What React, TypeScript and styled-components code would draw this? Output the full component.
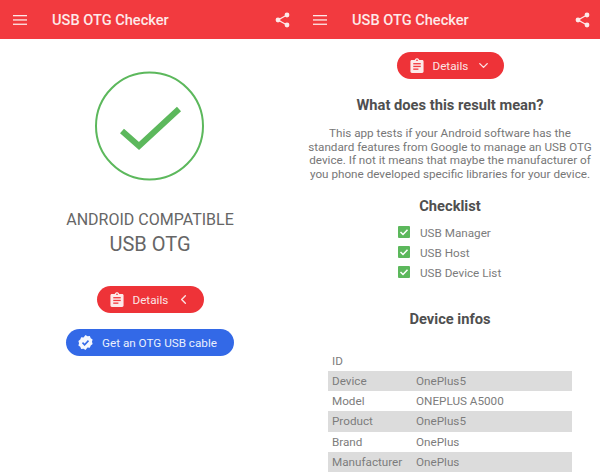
import React from 'react';
import styled, { createGlobalStyle } from 'styled-components';
import { ChevronDown, ChevronLeft } from 'lucide-react';

const Global = createGlobalStyle`
  html, body {
    margin: 0;
    padding: 0;
    background: #fff;
    font-family: Roboto, "Liberation Sans", sans-serif;
  }
`;

const Page = styled.div`
  width: 600px;
  height: 475px;
  display: flex;
  overflow: hidden;
`;

const Screen = styled.div`
  width: 300px;
  display: flex;
  flex-direction: column;
  align-items: center;
`;

const Header = styled.header`
  align-self: stretch;
  height: 39px;
  flex-shrink: 0;
  background: #f23a3f;
  color: #fde9e9;
  display: flex;
  align-items: center;
  padding: 0 10px 0 13px;
`;

const Title = styled.div`
  font-size: 14.6px;
  font-weight: 500;
  margin-left: 25px;
  flex: 1;
`;

const HeaderIcon = styled.svg`
  display: block;
  flex-shrink: 0;
`;

const ResultCircle = styled.svg`
  margin-top: 32px;
  display: block;
`;

const Compatible = styled.div`
  margin-top: 29px;
  font-size: 16px;
  line-height: 20px;
  color: #666;
`;

const OtgLabel = styled.div`
  margin-top: 2px;
  font-size: 20px;
  line-height: 24px;
  color: #666;
`;

const Pill = styled.div<{ $bg: string; $width: number; $top: number }>`
  width: ${(p) => p.$width}px;
  height: 27px;
  margin-top: ${(p) => p.$top}px;
  flex-shrink: 0;
  border-radius: 14px;
  background: ${(p) => p.$bg};
  color: #fbe4e4;
  font-size: 11.7px;
  display: flex;
  align-items: center;
`;

const DetailsText = styled.span`
  margin-left: 9px;
  width: 35px;
  white-space: nowrap;
`;

const PillIcon = styled.svg<{ $left: number }>`
  margin-left: ${(p) => p.$left}px;
  display: block;
`;

const ChevronSlot = styled.span`
  margin-left: 8px;
  display: flex;
`;

const CableText = styled.span`
  margin-left: 9px;
  color: #eaf0fd;
  white-space: nowrap;
`;

const Heading = styled.h2<{ $top: number }>`
  margin: ${(p) => p.$top}px 0 0;
  font-size: 14.7px;
  line-height: 20px;
  font-weight: 700;
  color: #4f4f4f;
`;

const Paragraph = styled.p`
  margin: 12px 0 0;
  width: 286px;
  text-align: center;
  font-size: 11.7px;
  line-height: 13.5px;
  color: #777;
`;

const Checklist = styled.ul`
  list-style: none;
  margin: 7px 0 0;
  padding: 0 0 0 98px;
  align-self: stretch;
`;

const CheckItem = styled.li`
  height: 20.2px;
  display: flex;
  align-items: center;
  gap: 10px;
  font-size: 11.7px;
  color: #7c7c7c;
`;

const Box = styled.svg`
  display: block;
  flex-shrink: 0;
  margin-top: -2px;
`;

const InfoTable = styled.div`
  margin-top: 22px;
  width: 244px;
  display: flex;
  flex-direction: column;
`;

const InfoRow = styled.div<{ $striped: boolean }>`
  height: 20.25px;
  display: grid;
  grid-template-columns: 84px 1fr;
  align-items: center;
  padding-left: 4px;
  font-size: 11.7px;
  color: #7c7c7c;
  background: ${(p) => (p.$striped ? '#dcdcdc' : 'transparent')};
`;

const rows = [
  ['ID', ''],
  ['Device', 'OnePlus5'],
  ['Model', 'ONEPLUS A5000'],
  ['Product', 'OnePlus5'],
  ['Brand', 'OnePlus'],
  ['Manufacturer', 'OnePlus'],
];

const checks = ['USB Manager', 'USB Host', 'USB Device List'];

const ClipboardIcon = () => (
  <PillIcon $left={13} width="14" height="15" viewBox="0 0 14 16">
    <path
      fill="#fde9e9"
      d="M1.5 2H4.6C4.9.9 5.9.2 7 .2S9.1.9 9.4 2h3.1c.8 0 1.5.7 1.500 1.500v11c0 .8-.7 1.500-1.500 1.500h-11C.7 16 0 15.300 0 14.500v-11C0 2.700.7 2 1.500 2z"
    />
    <rect x="3" y="5.400" width="8" height="1.400" fill="#f23a3f" />
    <rect x="3" y="8.300" width="8" height="1.400" fill="#f23a3f" />
    <rect x="3" y="11.200" width="5.500" height="1.400" fill="#f23a3f" />
    <circle cx="7" cy="2.400" r="0.900" fill="#f23a3f" />
  </PillIcon>
);

const BadgeIcon = () => (
  <PillIcon $left={12} width="15" height="15" viewBox="0 0 16 16">
    <path
      fill="#f4f7fe"
      d="M8 0l2.100 1.300 2.500-.2 1 2.300 2 1.500-.7 2.400.7 2.400-2 1.500-1 2.300-2.500-.2L8 16l-2.100-1.300-2.500.2-1-2.300-2-1.500.7-2.400-.7-2.400 2-1.500 1-2.300 2.500.2z"
    />
    <path d="M4.800 8.200l2.200 2.200 4.200-4.400" fill="none" stroke="#3369e7" strokeWidth="1.700" />
  </PillIcon>
);

const AppHeader = () => (
  <Header>
    <HeaderIcon width="14" height="10" viewBox="0 0 14 10">
      <rect y="0" width="14" height="1.300" fill="#fde9e9" />
      <rect y="4.300" width="14" height="1.300" fill="#fde9e9" />
      <rect y="8.600" width="14" height="1.300" fill="#fde9e9" />
    </HeaderIcon>
    <Title>USB OTG Checker</Title>
    <HeaderIcon width="16" height="16" viewBox="0 0 16 16">
      <path d="M13 3L4 8l9 5" fill="none" stroke="#fde9e9" strokeWidth="1.300" />
      <circle cx="13" cy="3" r="2.400" fill="#fde9e9" />
      <circle cx="4" cy="8" r="2.400" fill="#fde9e9" />
      <circle cx="13" cy="13" r="2.400" fill="#fde9e9" />
    </HeaderIcon>
  </Header>
);

export default function App() {
  return (
    <Page>
      <Global />
      <Screen>
        <AppHeader />
        <ResultCircle width="110" height="110" viewBox="0 0 110 110">
          <circle cx="54.500" cy="55" r="53.500" fill="none" stroke="#5cb85c" strokeWidth="2" />
          <path d="M27 60l17 15 40-37" fill="none" stroke="#5cb85c" strokeWidth="6" />
        </ResultCircle>
        <Compatible>ANDROID COMPATIBLE</Compatible>
        <OtgLabel>USB OTG</OtgLabel>
        <Pill $bg="#ee3338" $width={107} $top={30}>
          <ClipboardIcon />
          <DetailsText>Details</DetailsText>
          <ChevronSlot>
            <ChevronLeft size={15} strokeWidth={2.200} />
          </ChevronSlot>
        </Pill>
        <Pill $bg="#3369e7" $width={168} $top={16}>
          <BadgeIcon />
          <CableText>Get an OTG USB cable</CableText>
        </Pill>
      </Screen>
      <Screen>
        <AppHeader />
        <Pill $bg="#ee3338" $width={107} $top={13}>
          <ClipboardIcon />
          <DetailsText>Details</DetailsText>
          <ChevronSlot>
            <ChevronDown size={15} strokeWidth={2.200} />
          </ChevronSlot>
        </Pill>
        <Heading $top={16}>What does this result mean?</Heading>
        <Paragraph>
          This app tests if your Android software has the standard features from Google to manage an USB OTG device. If
          not it means that maybe the manufacturer of you phone developed specific libraries for your device.
        </Paragraph>
        <Heading $top={15}>Checklist</Heading>
        <Checklist>
          {checks.map((c) => (
            <CheckItem key={c}>
              <Box width="12" height="12" viewBox="0 0 12 12">
                <rect width="12" height="12" rx="1" fill="#5cb85c" />
                <path d="M2.500 6l2.500 2.500 4.500-4.800" fill="none" stroke="#fff" strokeWidth="1.500" />
              </Box>
              {c}
            </CheckItem>
          ))}
        </Checklist>
        <Heading $top={25}>Device infos</Heading>
        <InfoTable>
          {rows.map(([k, v], i) => (
            <InfoRow key={k} $striped={i % 2 === 1}>
              <span>{k}</span>
              <span>{v}</span>
            </InfoRow>
          ))}
        </InfoTable>
      </Screen>
    </Page>
  );
}
